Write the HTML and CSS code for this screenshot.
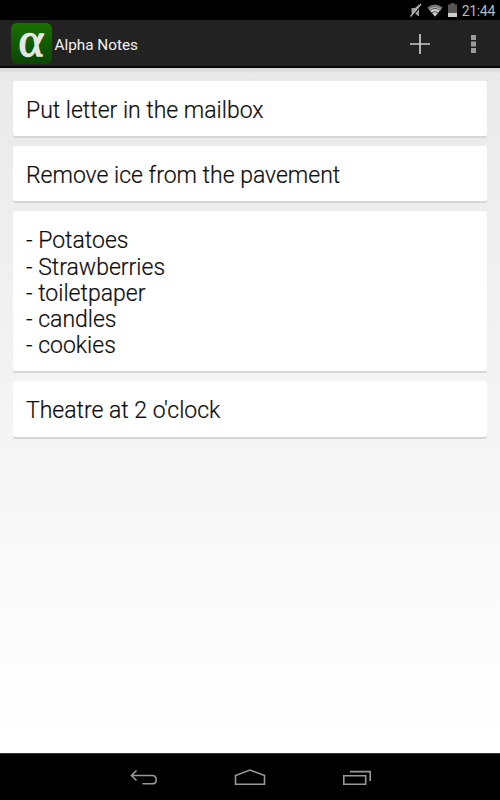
FILE: index.html
```
<!DOCTYPE html>
<html lang="en">
<head>
    <meta charset="UTF-8">
    <meta name="viewport" content="width=device-width, initial-scale=1.0">
    <title>Alpha Notes</title>
    <link rel="stylesheet" href="styles.css">
</head>
<body>
    <div class="status-bar">
        <svg class="status-icon" width="14" height="15" viewBox="0 0 14 15">
            <path d="M2.500 5h3.500l4-3.500v12L6 10.500H2.500z" fill="#a0a0a0"/>
            <path d="M13 1.500L2.500 14" stroke="#000" stroke-width="1.200"/>
            <path d="M12 1L1.500 13.500" stroke="#b5b5b5" stroke-width="1.300"/>
        </svg>
        <svg class="status-icon wifi" width="16" height="13" viewBox="0 0 16 13">
            <path d="M0.500 3.500Q8-2.300 15.500 3.500L8 12.500z" fill="#777"/>
            <path d="M2 5.300Q8 1 14 5.300L8 12.500z" fill="#c8c8c8"/>
            <path d="M2.800 6.300Q8 2.500 13.200 6.300M4.800 8.800Q8 6.200 11.200 8.800" fill="none" stroke="#333" stroke-width="0.800"/>
        </svg>
        <svg class="status-icon battery" width="9" height="14" viewBox="0 0 9 14">
            <path d="M2.500 0h4v1.500H9V14H0V1.500h2.500z" fill="#555"/>
            <path d="M0 10h9v4H0z" fill="#cdcdcd"/>
        </svg>
        <span class="clock">21:44</span>
    </div>

    <div class="action-bar">
        <div class="app-icon"><span>α</span></div>
        <h1 class="app-title">Alpha Notes</h1>
        <svg class="add" width="22" height="22" viewBox="0 0 22 22">
            <path d="M11 1v20M1 11h20" stroke="#ccc" stroke-width="1.700"/>
        </svg>
        <svg class="overflow" width="5" height="18" viewBox="0 0 5 18">
            <path d="M0 0h5v5H0zM0 6.500h5v5H0zM0 13h5v5H0z" fill="#999"/>
        </svg>
    </div>

    <main class="notes">
        <div class="note">Put letter in the mailbox</div>
        <div class="note">Remove ice from the pavement</div>
        <div class="note">- Potatoes<br>- Strawberries<br>- toiletpaper<br>- candles<br>- cookies</div>
        <div class="note">Theatre at 2 o'clock</div>
    </main>

    <div class="nav-bar">
        <svg width="28" height="18" viewBox="0 0 28 18">
            <path d="M7.500 1.500L2.500 6.500L7.500 11.500M2.500 6.500H23Q27.200 6.500 27.200 10.700T23 14.800H13.500"/>
        </svg>
        <svg class="home" width="32" height="18" viewBox="0 0 32 18">
            <path d="M1.500 15.200V6.500L16 1L30.500 6.500V15.200z"/>
        </svg>
        <svg width="28" height="18" viewBox="0 0 28 18">
            <path d="M0.800 6.800H22.700V15.200H0.800zM7 2.600H27.200V12"/>
        </svg>
    </div>
</body>
</html>
```
FILE: styles.css
```
* {
    margin: 0;
    padding: 0;
    box-sizing: border-box;
}
body {
    height: 100vh;
    display: flex;
    flex-direction: column;
    overflow: hidden;
    font-family: Roboto, "Liberation Sans", sans-serif;
    color: #0c0c0c;
    background: #000;
}

/* status bar */
.status-bar {
    height: 20px;
    display: flex;
    align-items: center;
    justify-content: flex-end;
    padding-right: 5px;
    background: #000;
}
.wifi {
    margin-left: 4px;
}
.battery {
    margin-left: 5px;
}
.clock {
    margin-left: 5px;
    padding-top: 1px;
    font-size: 14px;
    line-height: 18px;
    letter-spacing: -0.3px;
    color: #b8b8b8;
}

/* action bar */
.action-bar {
    height: 48px;
    display: flex;
    align-items: center;
    padding: 0 24px 0 10.5px;
    background: #222;
    border-bottom: 2px solid #080808;
}
.add,
.overflow {
    margin-top: 1px;
}
.app-icon {
    width: 41px;
    height: 41px;
    margin-top: 1px;
    display: flex;
    align-items: center;
    justify-content: center;
    border-radius: 6px;
    background: linear-gradient(#197000, #0b4600);
    color: #e6e6e6;
    font-family: "Liberation Serif", serif;
    font-size: 48px;
    font-style: italic;
    line-height: 41px;
    -webkit-text-stroke: 1.3px #e6e6e6;
}
.app-icon span {
    margin-top: -8px;
    transform: skewX(6deg);
}
.app-title {
    flex: 1;
    margin-left: 3px;
    padding-top: 3px;
    font-size: 15.3px;
    font-weight: 400;
    color: #f3f3f3;
}
.overflow {
    margin-left: 40px;
}

/* notes */
.notes {
    flex: 1;
    display: flex;
    flex-direction: column;
    gap: 10px;
    padding: 13px 13px 0;
    background: linear-gradient(rgba(0,0,0,0.07), transparent 6px), linear-gradient(#e9e9e9, #fff);
}
.note {
    padding: 17px 13px 12px;
    font-size: 23px;
    font-weight: 300;
    line-height: 26.2px;
    -webkit-text-stroke: 0.2px #0c0c0c;
    background: #fff;
    border-radius: 2px;
    box-shadow: 0 2px 0 #d6d6d6;
}

/* navigation bar */
.nav-bar {
    height: 47px;
    display: flex;
    align-items: center;
    justify-content: center;
    gap: 77px;
    padding-top: 2px;
    border-top: 1px solid #333;
    background: #000;
}
.nav-bar path {
    fill: none;
    stroke: #999;
    stroke-width: 1.6;
}
```
